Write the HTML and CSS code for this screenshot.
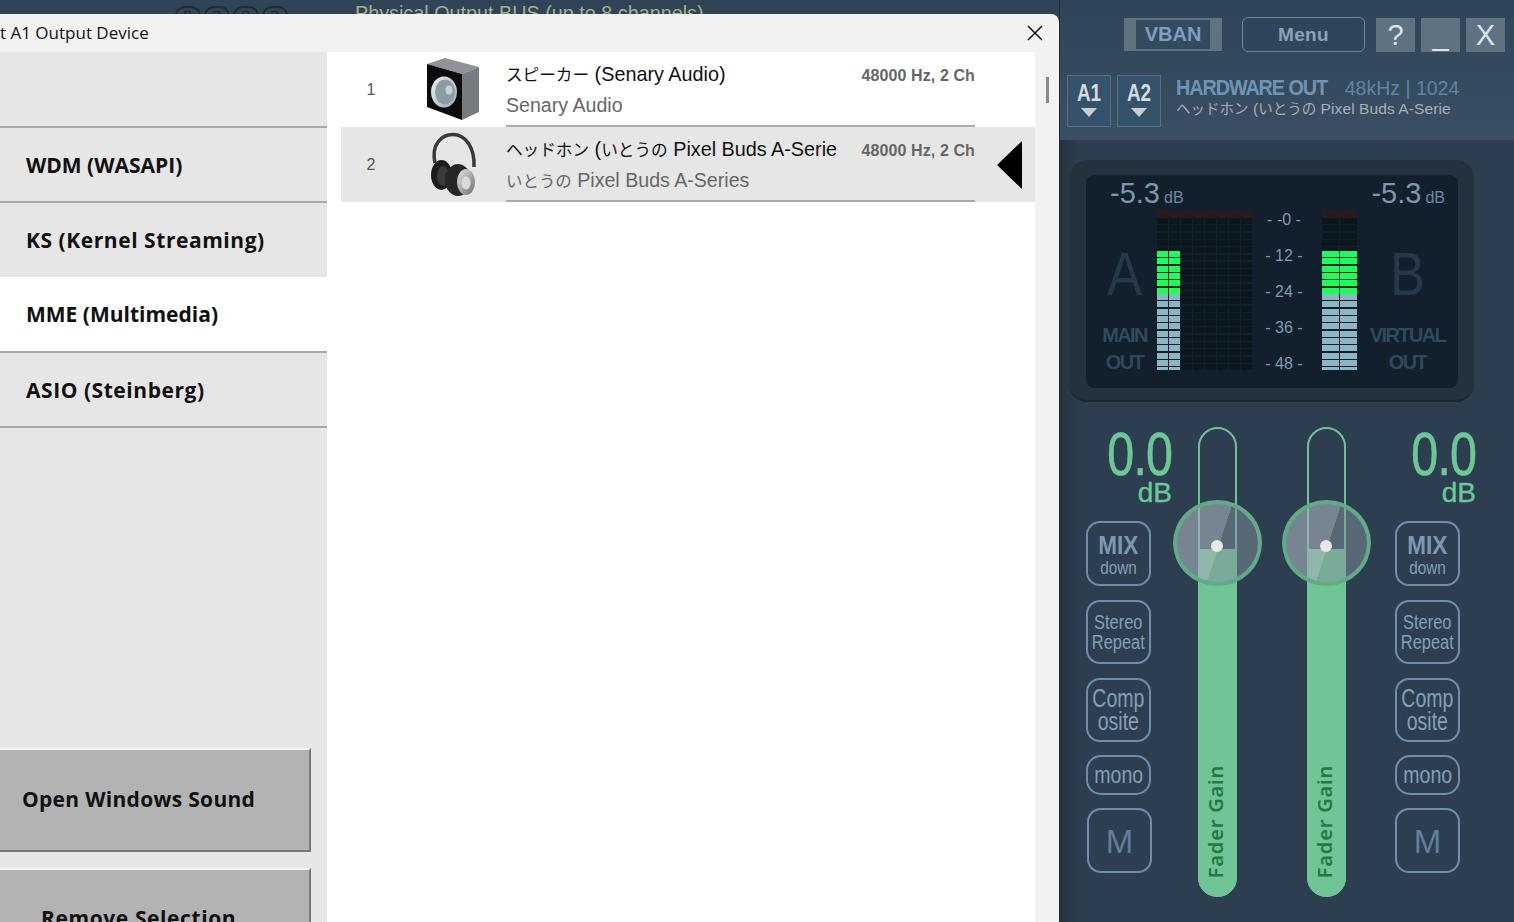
FILE: index.html

```html
<!DOCTYPE html>
<html lang="en">
<head>
<meta charset="UTF-8">
<title>Select A1 Output Device</title>
<meta name="viewport" content="width=device-width, initial-scale=1.0">
<link rel="stylesheet" href="styles.css">
</head>
<body>
<div class="app">

 <div class="left">
  <div class="behind">
   <div class="pills"><span>B</span><span>B</span><span>B</span><span>B</span></div>
   <div class="behind-title">Physical Output BUS (up to 8 channels)</div>
  </div>

  <div class="dialog">
   <div class="titlebar">
    <span class="title">t A1 Output Device</span>
    <svg class="close" width="16" height="16" viewBox="0 0 16 16"><path d="M1 1L15 15M15 1L1 15" stroke="#111" stroke-width="1.5" fill="none"/></svg>
   </div>
   <div class="dialog-body">
    <div class="sidebar">
     <div class="driver blank"></div>
     <div class="driver">WDM (WASAPI)</div>
     <div class="driver short loose">KS (Kernel Streaming)</div>
     <div class="driver on">MME (Multimedia)</div>
     <div class="driver loose">ASIO (Steinberg)</div>
     <div class="side-btns">
      <div class="side-btn">Open Windows Sound</div>
      <div class="side-btn remove">Remove Selection</div>
     </div>
    </div>

    <div class="list">
     <div class="row">
      <div class="num">1</div>
      <svg class="icon" width="56" height="66" viewBox="0 0 56 66">
       <defs>
        <linearGradient id="cone" x1="0" y1="0" x2="1" y2="1"><stop offset="0" stop-color="#eef2f3"/><stop offset="1" stop-color="#9aa9b0"/></linearGradient>
        <linearGradient id="metal" x1="0" y1="0" x2="1" y2="1"><stop offset="0" stop-color="#e8e8e8"/><stop offset="1" stop-color="#6d6d6d"/></linearGradient>
       </defs>
       <polygon points="2,8 20,2 54,11 37,18" fill="#8f9398"/>
       <polygon points="37,18 54,11 54,56 37,64" fill="#777b81"/>
       <polygon points="2,8 37,18 37,64 2,51" fill="#0c0c0c"/>
       <ellipse cx="19" cy="36" rx="13" ry="15.5" fill="url(#cone)"/>
       <ellipse cx="20" cy="36" rx="10" ry="12.5" fill="#8d9ca3"/>
       <ellipse cx="24" cy="34" rx="3.5" ry="4.5" fill="#c3d2d8"/>
      </svg>
      <div class="info">
       <div class="info-top"><span class="dev"><span class="jp">スピーカー</span> (Senary Audio)</span><span class="hz">48000 Hz, 2 Ch</span></div>
       <div class="sub">Senary Audio</div>
      </div>
     </div>
     <div class="row sel">
      <div class="num">2</div>
      <svg class="icon" width="56" height="66" viewBox="0 0 56 66">
       <path d="M10 32C6 14 16 3.500 28 3.500C40 3.500 50 16 49 36" fill="none" stroke="#3a3a3a" stroke-width="3.500"/>
       <ellipse cx="16.500" cy="44" rx="10.500" ry="15" fill="#1d1d1d"/>
       <ellipse cx="18" cy="45" rx="6" ry="10" fill="#3a3a3a"/>
       <ellipse cx="33" cy="49" rx="13" ry="16" fill="#262626"/>
       <ellipse cx="41" cy="51" rx="9" ry="13" fill="url(#metal)"/>
       <ellipse cx="41" cy="52" rx="4.500" ry="6.500" fill="#dcdcdc"/>
      </svg>
      <div class="info">
       <div class="info-top"><span class="dev"><span class="jp">ヘッドホン</span> (<span class="jp">いとうの</span> Pixel Buds A-Serie</span><span class="hz">48000 Hz, 2 Ch</span></div>
       <div class="sub"><span class="jp">いとうの</span> Pixel Buds A-Series</div>
      </div>
      <div class="arrow"></div>
     </div>
    </div>

    <div class="scroll"><div class="thumb"></div></div>
   </div>
  </div>
 </div>

 <div class="panel">
  <div class="head">
   <div class="head-top">
    <div class="vban"><span>VBAN</span></div>
    <div class="menu">Menu</div>
    <div class="sq">?</div>
    <div class="sq">_</div>
    <div class="sq">X</div>
   </div>
   <div class="head-bus">
    <div class="bus"><span>A1</span><i></i></div>
    <div class="bus"><span>A2</span><i></i></div>
    <div class="hw">
     <div class="hw-line"><span class="hw-name">HARDWARE OUT</span><span class="hw-rate">48kHz | 1024</span></div>
     <div class="hw-dev"><span class="jp">ヘッドホン</span> (<span class="jp">いとうの</span> Pixel Buds A-Serie</div>
    </div>
   </div>
  </div>

  <div class="meter-box">
   <div class="meter-in">
    <div class="levels">
     <div class="lvl">-5.3<small>dB</small></div>
     <div class="lvl">-5.3<small>dB</small></div>
    </div>
    <div class="meters">
     <div class="tag tag-a">
      <div class="big">A</div>
      <div class="tag-txt">MAIN<br>OUT</div>
     </div>
     <div class="bars wide">
      <div class="bar"><div class="clip"></div><div class="off"></div><div class="green"></div><div class="blue"></div></div>
      <div class="bar"><div class="clip"></div><div class="off"></div><div class="green"></div><div class="blue"></div></div>
      <div class="bar"><div class="clip"></div><div class="off all"></div></div>
      <div class="bar"><div class="clip"></div><div class="off all"></div></div>
      <div class="bar"><div class="clip"></div><div class="off all"></div></div>
      <div class="bar"><div class="clip"></div><div class="off all"></div></div>
      <div class="bar"><div class="clip"></div><div class="off all"></div></div>
      <div class="bar"><div class="clip"></div><div class="off all"></div></div>
     </div>
     <div class="scale">
      <div>- -0 -</div><div>- 12 -</div><div>- 24 -</div><div>- 36 -</div><div>- 48 -</div>
     </div>
     <div class="bars thick">
      <div class="bar"><div class="clip"></div><div class="off"></div><div class="green"></div><div class="blue"></div></div>
      <div class="bar"><div class="clip"></div><div class="off"></div><div class="green"></div><div class="blue"></div></div>
     </div>
     <div class="tag tag-b">
      <div class="big">B</div>
      <div class="tag-txt">VIRTUAL<br>OUT</div>
     </div>
    </div>
   </div>
  </div>

  <div class="mixer">
   <div class="strip">
    <div class="gain"><div class="gain-num">0.0</div><div class="gain-db">dB</div></div>
    <div class="btns">
     <div class="btn mix"><b>MIX</b><span>down</span></div>
     <div class="btn stereo"><span>Stereo<br>Repeat</span></div>
     <div class="btn comp"><span>Comp<br>osite</span></div>
     <div class="btn mono"><span>mono</span></div>
     <div class="btn mute nudge">M</div>
    </div>
   </div>

   <div class="fader first">
    <div class="fill"><span>Fader Gain</span></div>
    <div class="knob"><div class="dot"></div></div>
   </div>
   <div class="fader second">
    <div class="fill"><span>Fader Gain</span></div>
    <div class="knob"><div class="dot"></div></div>
   </div>

   <div class="strip right">
    <div class="gain"><div class="gain-num">0.0</div><div class="gain-db">dB</div></div>
    <div class="btns">
     <div class="btn mix"><b>MIX</b><span>down</span></div>
     <div class="btn stereo"><span>Stereo<br>Repeat</span></div>
     <div class="btn comp"><span>Comp<br>osite</span></div>
     <div class="btn mono"><span>mono</span></div>
     <div class="btn mute">M</div>
    </div>
   </div>
  </div>
 </div>

</div>
</body>
</html>
```

FILE: styles.css

```css
html,body{margin:0;height:100%;overflow:hidden}
body{font-family:"Liberation Sans","Noto Sans CJK JP",sans-serif;background:#2c3e50}
.app{display:flex;height:922px;width:1514px;overflow:hidden}
.jp{font-size:.84em}

/* left side: app behind + device dialog */
.left{width:1059px;flex:none;background:#2f4456}
.behind{height:14px;overflow:hidden;display:flex;align-items:flex-start;color:#a7b08c}
.pills{display:flex;gap:3px;margin:6px 0 0 175px;width:180px}
.pills span{width:26px;height:24px;border:2px solid #1f2a33;border-radius:10px;box-sizing:border-box;color:#1f2a33;font-size:14px;text-align:center}
.behind-title{font-size:19.8px;line-height:24px;margin-top:1px;white-space:nowrap}

.dialog{height:908px;background:#f2f2f2;border-top-right-radius:8px;display:flex;flex-direction:column}
.titlebar{height:38px;flex:none;display:flex;align-items:center;justify-content:space-between;padding-right:16px}
.title{font-family:"Open Sans",sans-serif;font-size:17px;color:#111;margin-top:-2px}
.dialog-body{flex:1;display:flex;min-height:0}

.sidebar{width:327px;flex:none;background:#e6e6e6;display:flex;flex-direction:column;overflow:hidden}
.driver{height:73px;flex:none;box-sizing:content-box;border-bottom:2px solid #a8a8a8;display:flex;align-items:center;padding-left:26px;font-family:"Open Sans",sans-serif;font-weight:700;font-size:21px;color:#111;line-height:70px}
.driver.blank{height:74px}
.driver.short{height:74px;border-bottom:0}
.driver.on{background:#fff;height:74px}
.driver.loose{letter-spacing:.55px}
.side-btns{margin-top:320px;flex:none;display:flex;flex-direction:column;gap:16px}
.side-btn{width:311px;height:104px;flex:none;box-sizing:border-box;background:#b3b3b3;border-top:2px solid #f3f3f3;border-right:2px solid #777;border-bottom:2px solid #777;display:flex;align-items:center;padding:0 0 2px 22px;font-family:"Open Sans",sans-serif;font-weight:700;font-size:21px;letter-spacing:.3px;color:#111}
.side-btn.remove{padding-left:41px;align-items:flex-start;padding-top:34px;letter-spacing:.6px}

.list{width:694px;flex:none;background:#fff;padding-left:14px}
.row{height:75px;display:flex;align-items:flex-start}
.row.sel{background:#e6e6e6}
.num{width:60px;flex:none;text-align:center;font-size:16px;line-height:75px;color:#555}
.icon{margin:4px 25px 0 24px;flex:none}
.info{width:469px;height:75px;flex:none;border-bottom:2px solid #ababab;box-sizing:border-box}
.info-top{display:flex;justify-content:space-between;align-items:baseline;height:41px;padding-top:10px;box-sizing:border-box}
.dev{font-size:19.8px;color:#111;white-space:nowrap}
.hz{font-size:16px;font-weight:700;letter-spacing:.1px;color:#666;white-space:nowrap}
.sub{font-size:19.6px;color:#666;line-height:24px;white-space:nowrap}
.arrow{width:0;height:0;margin:14px 0 0 22px;border-top:24px solid transparent;border-bottom:24px solid transparent;border-right:25px solid #000}
.scroll{flex:1;background:#f2f2f2}
.thumb{width:3px;height:26px;background:#8a8a8a;margin:25px 0 0 11px}

/* right side: voicemeeter strip */
.panel{width:455px;flex:none;background:linear-gradient(90deg,#25333f 0,#2c3e50 20px);border-left:1px solid #1e2a35;box-sizing:border-box}
.head{height:140px;background:linear-gradient(180deg,#2f4456 0,#3a4f63 100%);box-sizing:border-box;padding-top:17px}
.head-top{display:flex;align-items:flex-start;padding-left:64px}
.vban{width:98px;height:33px;margin-top:1px;background:#5e7282;box-sizing:border-box;padding:2px 12px;margin-right:20px}
.vban span{display:block;height:29px;background:#344a5e;color:#7fa0bb;font-weight:700;font-size:20px;line-height:29px;text-align:center}
.menu{width:123px;height:35px;box-sizing:border-box;border:1px solid #73879a;border-radius:6px;background:#304559;color:#8ba3b6;font-weight:700;font-size:19px;line-height:33px;text-align:center;margin-right:11px;letter-spacing:.3px}
.sq{width:39px;height:34px;margin:1px 6px 0 0;background:#5e7282;color:#dfe4e8;font-size:29px;line-height:34px;text-align:center}
.head-bus{display:flex;padding:23px 0 0 7px;align-items:flex-start}
.bus{width:44px;height:52px;box-sizing:border-box;background:#34526b;border:1px solid #5a7184;color:#d7dbde;font-weight:700;font-size:23px;text-align:center;line-height:34px;margin-right:6px}
.bus span{display:block;transform:scaleX(.82)}
.bus i{display:block;width:0;height:0;margin:-2px auto 0;border-left:8px solid transparent;border-right:8px solid transparent;border-top:9px solid #c9ced2}
.hw{margin-left:9px}
.hw-line{display:flex;align-items:baseline;line-height:26px;white-space:nowrap}
.hw-name{font-weight:700;font-size:22px;color:#6f95b6;letter-spacing:-1.2px;margin-right:1px;transform:scaleX(.9);transform-origin:left}
.hw-rate{font-size:19.5px;color:#5e85a6}
.hw-dev{font-size:15.5px;color:#a8b0b6;white-space:nowrap;line-height:15px;letter-spacing:.1px}
.hw-dev .jp{font-size:14.5px;letter-spacing:0}

.meter-box{width:405px;height:242px;margin:20px 0 0 9px;box-sizing:border-box;padding:15px 16px 14px 17px;background:#24323d;border-radius:18px;border-bottom:2px solid #1c2730}
.meter-in{height:213px;background:#11202c;border-radius:8px;box-sizing:border-box}
.levels{height:35px;display:flex;justify-content:space-between;padding:0 13px 0 24px;align-items:flex-start}
.lvl{font-size:29px;color:#7d97ab;line-height:35px;padding-top:1px}
.lvl small{font-size:16px;color:#6a8aa5;margin-left:4px}
.meters{display:flex;height:160px}
.tag{display:flex;flex-direction:column;align-items:center;flex:none;color:#2f4a5c}
.tag-a{width:71px;padding-left:6px;box-sizing:border-box}
.tag-b{width:101px}
.big{font-size:62px;line-height:60px;margin-top:34px;color:#25394a;transform:scaleX(.85)}
.tag-txt{font-weight:700;font-size:20px;line-height:27px;text-align:center;margin-top:18px;letter-spacing:-1.6px}
.bars{display:flex;gap:1px;flex:none}
.bar{display:flex;flex-direction:column;width:11px}
.thick .bar{width:17px}
.clip{height:8px;background:#2a1a1c;flex:none}
.off{height:33px;background:repeating-linear-gradient(180deg,#0a171d 0 5.9px,#11202c 5.9px 7.3px);flex:none}
.off.all{height:152px}
.green{height:43px;flex:none;background:repeating-linear-gradient(180deg,#1bff58 0 5.9px,#11202c 5.9px 7.33px)}
.blue{height:76px;flex:none;background:repeating-linear-gradient(180deg,#8db5c4 0 5.9px,#11202c 5.9px 7.33px)}
.scale{width:70px;flex:none;box-sizing:border-box;padding-right:6px;display:flex;flex-direction:column;gap:16px;text-align:center;color:#7d9bb3;font-size:16px;line-height:20px;white-space:nowrap}

.mixer{display:flex;margin-top:25px;align-items:flex-start}
.strip{width:86px;flex:none;margin-left:26px}
.strip.right{width:81px;margin-left:49px}
.gain{height:94px;display:flex;flex-direction:column;align-items:flex-end;color:#6dc795}
.gain-num{font-size:62px;line-height:54px;transform:scaleX(.78);transform-origin:right;letter-spacing:-1px;-webkit-text-stroke:.7px #6dc795}
.gain-db{font-size:28px;line-height:26px;margin-top:-1px;-webkit-text-stroke:.4px #6dc795}
.btns{display:flex;flex-direction:column}
.btn{width:65px;box-sizing:border-box;border:2px solid #6f8ea8;border-radius:14px;color:#84a0b4;display:flex;flex-direction:column;align-items:center;justify-content:center;text-align:center;margin-bottom:14px}
.mix{height:65px;padding-top:3px}
.mix b{font-size:25px;line-height:25px;transform:scaleX(.9);color:#7d99b0}
.mix span{font-size:18px;line-height:20px;transform:scaleX(.85)}
.stereo{height:64px}
.stereo span{font-size:20px;line-height:20px;transform:scaleX(.82);white-space:nowrap}
.comp{height:64px;margin-bottom:13px}
.comp span{font-size:25px;line-height:23px;transform:scaleX(.78)}
.mono{height:40px;margin-bottom:13px;border-radius:15px}
.mono span{font-size:23px;transform:scaleX(.85)}
.mute{height:65px;font-size:33px;color:#607f99;padding-top:3px}
.mute.nudge{margin-left:1px}

.fader{width:39px;height:470px;flex:none;box-sizing:border-box;border:2px solid #6fc395;border-radius:20px;position:relative;display:flex;flex-direction:column;justify-content:flex-end;margin-left:26px}
.fader.second{margin-left:70px}
.fill{height:348px;margin:0 -2px -2px;background:#6fc595;border-radius:0 0 20px 20px;display:flex;justify-content:center;align-items:flex-end;padding:0 3px 19px 0;box-sizing:border-box}
.fill span{writing-mode:vertical-rl;transform:rotate(180deg);font-family:"Noto Sans",sans-serif;font-weight:600;font-size:20px;letter-spacing:.8px;color:#1f7a45;line-height:20px;white-space:nowrap}
.knob{position:absolute;left:-27px;top:71px;width:89px;height:86px;box-sizing:border-box;border:4px solid #62ab87;border-radius:50%;background:linear-gradient(108deg,rgba(165,175,185,.62) 52%,rgba(130,145,155,.5) 52%)}
.dot{position:absolute;left:34px;top:36px;width:12px;height:12px;border-radius:50%;background:#e8e8e8}
```
